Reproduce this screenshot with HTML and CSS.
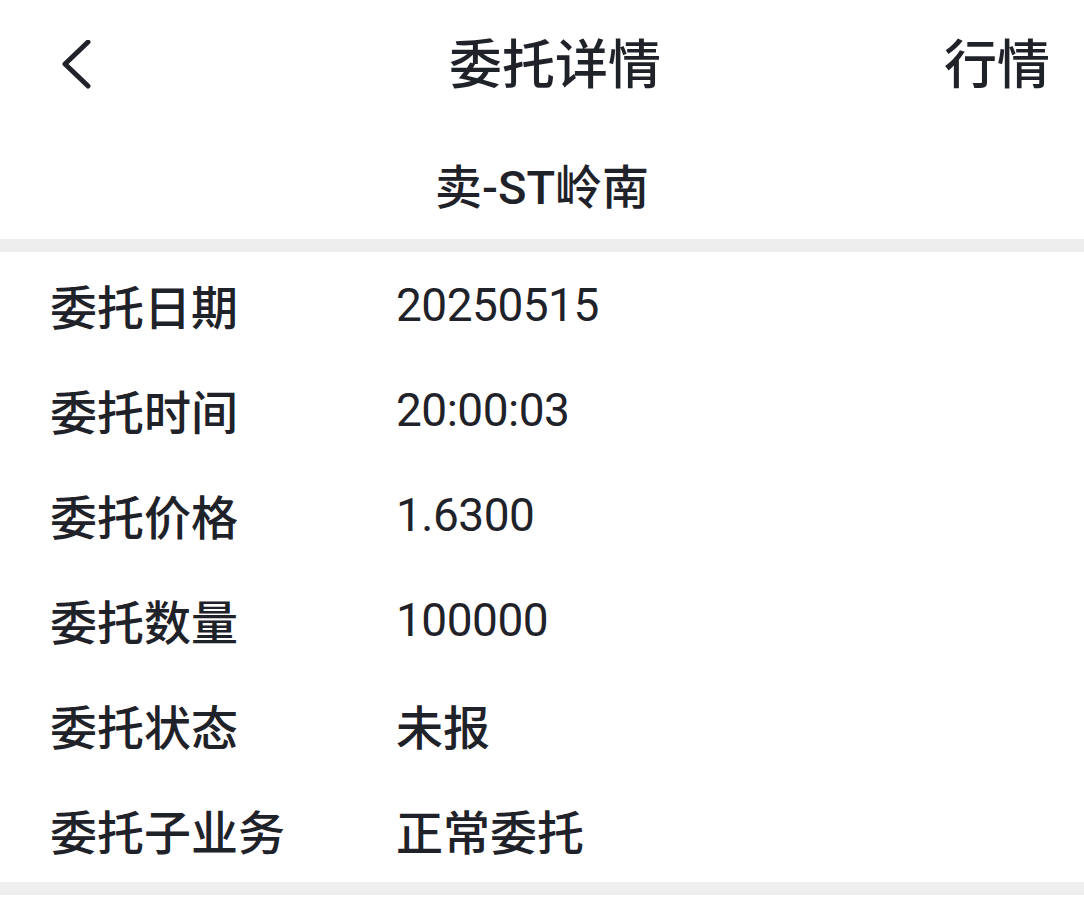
FILE: index.html
```html
<!DOCTYPE html>
<html lang="zh-CN">
<head>
  <meta charset="UTF-8" />
  <meta name="viewport" content="width=device-width, initial-scale=1" />
  <title>委托详情</title>
  <link rel="stylesheet" href="styles.css">
</head>
<body>

<header class="topbar">
  <a class="back" href="#" aria-label="返回">
    <svg width="34" height="52" viewBox="0 0 34 52">
      <polyline points="28,2 5,24 28,46" fill="none" stroke="#1f2229" stroke-width="5" stroke-linecap="round" stroke-linejoin="round" />
    </svg>
  </a>
  <h1 class="title">委托详情</h1>
  <a class="market" href="#">行情</a>
</header>

<div class="stock">卖-ST岭南</div>

<div class="divider"></div>

<ul class="detail">
  <li><span class="label">委托日期</span><span class="value">20250515</span></li>
  <li><span class="label">委托时间</span><span class="value">20:00:03</span></li>
  <li><span class="label">委托价格</span><span class="value">1.6300</span></li>
  <li><span class="label">委托数量</span><span class="value">100000</span></li>
  <li><span class="label">委托状态</span><span class="value text">未报</span></li>
  <li><span class="label">委托子业务</span><span class="value text">正常委托</span></li>
</ul>

<div class="divider"></div>

</body>
</html>
```

FILE: styles.css
```css
/* Reset */
* {
  box-sizing: border-box;
  margin: 0;
  padding: 0;
}

body {
  font-family: Roboto, "Noto Sans CJK SC", sans-serif;
  background: #fff;
  color: #1f2229;
}

a {
  color: inherit;
  text-decoration: none;
}

/* Top bar */
.topbar {
  display: grid;
  grid-template-columns: 1fr auto 1fr;
  align-items: center;
  height: 132px;
  padding: 0 34px 0 60px;
}

.back {
  display: flex;
  align-items: center;
}

.title {
  font-size: 53px;
  font-weight: 500;
  line-height: 1;
}

.market {
  justify-self: end;
  font-size: 53px;
  font-weight: 500;
  line-height: 1;
}

/* Stock name */
.stock {
  text-align: center;
  font-size: 47px;
  font-weight: 500;
  line-height: 1;
  padding: 32px 0 28px;
}

.divider {
  height: 13px;
  background: #eeeeee;
}

/* Detail rows */
.detail {
  list-style: none;
}

.detail li {
  display: flex;
  align-items: center;
  height: 105px;
  padding-left: 50px;
  font-size: 47px;
  font-weight: 500;
}

.label {
  width: 346px;
}

.value {
  font-size: 46px;
  font-weight: 400;
  letter-spacing: -0.5px;
}

.value.text {
  font-size: 47px;
  font-weight: 500;
  letter-spacing: 0;
}
```
